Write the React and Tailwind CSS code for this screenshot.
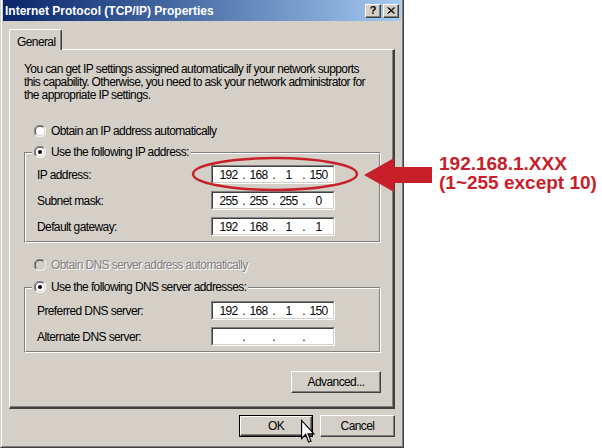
import React from 'react';

const Radio = ({ checked, disabled }) => (
    <svg width="12" height="12" viewBox="0 0 12 12" className="shrink-0">
        <circle cx="6" cy="6" r="5.5" fill={disabled ? '#d4d0c8' : '#ffffff'} />
        <path d="M1.8 10.2 A5.9 5.9 0 0 1 10.2 1.8" fill="none" stroke="#808080" strokeWidth="1" />
        <path d="M10.2 1.8 A5.9 5.9 0 0 1 1.8 10.2" fill="none" stroke="#ffffff" strokeWidth="1" />
        <path d="M2.6 9.4 A4.8 4.8 0 0 1 9.4 2.6" fill="none" stroke="#404040" strokeWidth="1" />
        <path d="M9.4 2.6 A4.8 4.8 0 0 1 2.6 9.4" fill="none" stroke="#d4d0c8" strokeWidth="1" />
        {checked && <circle cx="6" cy="6" r="2" fill="#000000" />}
    </svg>
);

const IpBox = ({ parts }) => (
    <div className="w-[124px] h-[19px] border-t border-l border-t-[#808080] border-l-[#808080] border-b border-r border-b-white border-r-white">
        <div className="h-full bg-white border-t border-l border-t-[#404040] border-l-[#404040] border-b border-r border-b-[#d4d0c8] border-r-[#d4d0c8] flex items-center pl-[4px] text-black">
            {parts.map((p, i) => (
                <React.Fragment key={i}>
                    <span className="w-[23px] text-center">{p}</span>
                    {i < 3 && <span className="w-[7px] text-center">.</span>}
                </React.Fragment>
            ))}
        </div>
    </div>
);

const Row = ({ label, parts, first }) => (
    <div className={(first ? 'mt-[5px]' : 'mt-[7px]') + ' flex items-center h-[19px] pl-[11px]'}>
        <span className="w-[174px]">{label}</span>
        <IpBox parts={parts} />
    </div>
);

const Btn = ({ children, w, isDefault }) => (
    <div className={w + ' h-[22px] ' + (isDefault ? 'border border-black' : '')}>
        <div className="h-full flex items-center justify-center border-t border-l border-t-white border-l-white border-b border-r border-b-[#404040] border-r-[#404040] shadow-[inset_-1px_-1px_0_#808080]">
            {children}
        </div>
    </div>
);

const Group = ({ legend, children }) => (
    <div className="ml-[14px] mr-[12px] border-t border-l border-t-[#808080] border-l-[#808080] border-b border-r border-b-white border-r-white">
        <div className="flex flex-col border-t border-l border-t-white border-l-white border-b border-r border-b-[#808080] border-r-[#808080] pb-[5px]">
            <div className="-mt-[10px] ml-[6px] self-start flex items-center gap-[5px] h-[16px] bg-[#d4d0c8] px-[2px]">
                <Radio checked />
                <span>{legend}</span>
            </div>
            {children}
        </div>
    </div>
);

const App = () => {
    return (
        <div className="w-[602px] h-[448px] bg-white flex relative overflow-hidden font-['Liberation_Sans',Arial,sans-serif]">
            {/* Dialog window */}
            <div className="w-[404px] h-[448px] shrink-0 bg-[#d4d0c8] border-l border-l-[#d4d0c8] border-r border-r-[#404040] border-b border-b-[#404040]">
                <div className="h-full flex flex-col border-l border-l-white border-r border-r-[#808080] border-b border-b-[#808080] text-[12px] tracking-[-0.6px] text-black">
                    {/* Title bar */}
                    <div className="mx-[1px] h-[21px] flex items-center justify-between pl-[2px] pr-[2px] bg-gradient-to-r from-[#0a246a] to-[#a6caf0]">
                        <span className="text-white font-bold text-[12px] tracking-normal">Internet Protocol (TCP/IP) Properties</span>
                        <div className="flex gap-[2px]">
                            <div className="w-[16px] h-[14px] bg-[#d4d0c8] border-t border-l border-t-white border-l-white border-b border-r border-b-[#404040] border-r-[#404040] shadow-[inset_-1px_-1px_0_#808080] flex items-center justify-center font-bold text-[11px] tracking-normal leading-none">?</div>
                            <div className="w-[16px] h-[14px] bg-[#d4d0c8] border-t border-l border-t-white border-l-white border-b border-r border-b-[#404040] border-r-[#404040] shadow-[inset_-1px_-1px_0_#808080] flex items-center justify-center">
                                <svg width="8" height="7" viewBox="0 0 8 7">
                                    <path d="M0.5 0.5 L7 6.5 M1.5 0.5 L8 6.5 M7 0.5 L0.5 6.5 M8 0.5 L1.5 6.5" stroke="#000" strokeWidth="1" />
                                </svg>
                            </div>
                        </div>
                    </div>

                    {/* Tab */}
                    <div className="mt-[8px] ml-[7px] relative z-10 -mb-[1px] w-[53px] h-[21px] bg-[#d4d0c8] border-t border-l border-t-white border-l-white border-r border-r-[#404040] shadow-[inset_-1px_0_0_#808080] rounded-t-[2px] pl-[7px] pt-[3px]">
                        General
                    </div>

                    {/* Tab panel */}
                    <div className="mx-[7px] flex flex-col border-t border-l border-t-white border-l-white border-r-2 border-r-[#404040] border-b-2 border-b-[#404040] shadow-[inset_-1px_-1px_0_#808080] pb-[14px]">
                        <p className="pl-[14px] pt-[13px] leading-[13px] whitespace-nowrap">
                            You can get IP settings assigned automatically if your network supports<br />
                            this capability. Otherwise, you need to ask your network administrator for<br />
                            the appropriate IP settings.
                        </p>

                        <div className="mt-[21px] ml-[24px] h-[16px] flex items-center gap-[5px]">
                            <Radio />
                            <span>Obtain an IP address automatically</span>
                        </div>

                        <div className="mt-[13px]">
                            <Group legend="Use the following IP address:">
                                <Row first label="IP address:" parts={['192', '168', '1', '150']} />
                                <Row label="Subnet mask:" parts={['255', '255', '255', '0']} />
                                <Row label="Default gateway:" parts={['192', '168', '1', '1']} />
                            </Group>
                        </div>

                        <div className="mt-[14px] ml-[24px] h-[16px] flex items-center gap-[5px]">
                            <Radio disabled />
                            <span className="text-[#808080] [text-shadow:1px_1px_0_#ffffff]">Obtain DNS server address automatically</span>
                        </div>

                        <div className="mt-[14px]">
                            <Group legend="Use the following DNS server addresses:">
                                <div className="mt-[6px] flex items-center h-[19px] pl-[11px]">
                                    <span className="w-[174px]">Preferred DNS server:</span>
                                    <IpBox parts={['192', '168', '1', '150']} />
                                </div>
                                <div className="mt-[7px] flex items-center h-[19px] pl-[11px]">
                                    <span className="w-[174px]">Alternate DNS server:</span>
                                    <IpBox parts={['', '', '', '']} />
                                </div>
                            </Group>
                        </div>

                        <div className="mt-[18px] mr-[12px] flex justify-end">
                            <Btn w="w-[90px]">Advanced...</Btn>
                        </div>
                    </div>

                    {/* Bottom buttons */}
                    <div className="mt-[6px] pr-[7px] flex justify-end gap-[7px]">
                        <Btn w="w-[74px]" isDefault>OK</Btn>
                        <Btn w="w-[75px]">Cancel</Btn>
                    </div>
                </div>
            </div>

            {/* Callout text */}
            <div className="pl-[35px] pt-[154px] text-[#c8202a] font-bold text-[19px] leading-[19px] whitespace-nowrap">
                192.168.1.XXX<br />
                (1~255 except 10)
            </div>

            {/* Annotation overlay: ellipse + arrow */}
            <svg className="absolute left-0 top-0 pointer-events-none" width="602" height="448">
                <ellipse cx="275" cy="174" rx="82" ry="16" fill="none" stroke="#c8202a" strokeWidth="2.5" />
                <polygon points="364,175 394,158 394,167 432,167 432,183 394,183 394,192" fill="#c8202a" />
            </svg>

            {/* Mouse pointer */}
            <svg className="absolute left-[301px] top-[417px] pointer-events-none" width="14" height="29" viewBox="0 0 12 20">
                <path d="M0.5 0.5 L0.5 16 L4 12.5 L6.5 19 L8.5 18.2 L6 12 L11 12 Z" fill="#ffffff" stroke="#000000" strokeWidth="1" strokeLinejoin="miter" />
            </svg>
        </div>
    );
};

export default App;
